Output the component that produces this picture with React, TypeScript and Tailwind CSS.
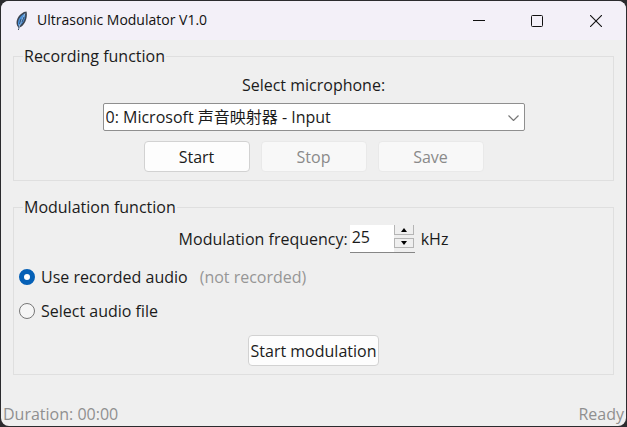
import { useState } from 'react';
import type { ReactNode } from 'react';

function FeatherIcon() {
  return (
    <svg width="14" height="20" viewBox="0 0 14 20" aria-hidden="true">
      <path d="M3 19 L3 16 C0 12 2 6 6 3 C8 1.300 10 .5 11.500 .5 C12.500 4 11.500 10 8.500 13.500 C7 15.500 6 16 4.500 16.500 L3.800 19 Z" fill="#3b4452" />
      <path d="M3 13.500 C2.500 8.500 5.500 4.500 10 2.500 C10.800 6 9.500 9.500 7 12.500 L4 15.500 Z" fill="#4a8fd6" />
      <path d="M10 2.500 C8 7 5.500 11 3.500 18" fill="none" stroke="#a9c4e0" strokeWidth=".8" />
      <path d="M6 8 L4.500 13 M9 6 L7 11" fill="none" stroke="#27405f" strokeWidth=".8" />
    </svg>
  );
}

function TitleBar() {
  return (
    <header className="flex h-[39px] items-center bg-[#f3f0f8] pl-3.5 text-sm text-[#111111]">
      <FeatherIcon />
      <h1 className="ml-2 grow pb-px font-['Open_Sans',sans-serif]">Ultrasonic Modulator V1.0</h1>
      <button type="button" aria-label="Minimize" className="flex h-full w-[58px] items-center justify-center">
        <svg width="12" height="12" viewBox="0 0 12 12"><path d="M0 5.500H12" stroke="#111" /></svg>
      </button>
      <button type="button" aria-label="Maximize" className="flex h-full w-[58px] items-center justify-center">
        <svg width="12" height="12" viewBox="0 0 12 12" fill="none"><rect x=".5" y=".5" width="11" height="11" rx="1" stroke="#111" /></svg>
      </button>
      <button type="button" aria-label="Close" className="flex h-full w-[60px] items-center justify-center">
        <svg width="12" height="12" viewBox="0 0 12 12"><path d="M0 0L12 12M12 0L0 12" stroke="#111" strokeWidth="1.100" /></svg>
      </button>
    </header>
  );
}

function Group({ title, children }: { title: string; children: ReactNode }) {
  return (
    <fieldset className="min-w-0 border border-[#dfdfdf] px-[5px] pb-2">
      <legend className="ml-1 px-px">{title}</legend>
      {children}
    </fieldset>
  );
}

function PushButton({ children, disabled, wide }: { children: ReactNode; disabled?: boolean; wide?: boolean }) {
  return (
    <button
      type="button"
      disabled={disabled}
      className={`h-[31px] rounded border border-[#d2d2d2] bg-[#fdfdfd] text-[#1b1b1b] disabled:border-[#e9e9e9] disabled:bg-[#f8f8f8] disabled:text-[#8a8a8a] ${wide ? 'px-0.5' : 'w-[106px]'}`}
    >
      {children}
    </button>
  );
}

function Radio({ id, label, checked, onPick }: { id: string; label: string; checked: boolean; onPick: () => void }) {
  return (
    <>
      <input
        id={id}
        type="radio"
        name="source"
        checked={checked}
        onChange={onPick}
        className="size-4 shrink-0 appearance-none rounded-full border border-[#777777] bg-[#f5f5f5] checked:border-5 checked:border-[#0560b6] checked:bg-white"
      />
      <label htmlFor={id} className="ml-1.5">{label}</label>
    </>
  );
}

export default function App() {
  const [source, setSource] = useState('recorded');
  const [freq, setFreq] = useState(25);

  return (
    <div className="flex min-h-screen bg-[#2b2b2e] p-px font-['Open_Sans','Noto_Sans_CJK_SC',sans-serif] text-base leading-5 text-[#1b1b1b]">
      <div className="flex grow flex-col overflow-hidden rounded-lg bg-[#efefef]">
        <TitleBar />
        <main className="flex grow flex-col gap-4 px-3 pt-1.5">
          <Group title="Recording function">
            <div className="flex flex-col items-center pt-[9px]">
              <label htmlFor="mic">Select microphone:</label>
              <div className="relative mt-2 w-[422px] max-w-full">
                <select id="mic" className="h-7 w-full appearance-none rounded-xs border border-[#8f8f8f] bg-white pl-0.5 text-base">
                  <option>0: Microsoft 声音映射器 - Input</option>
                </select>
                <svg className="pointer-events-none absolute top-3 right-1.5" width="11" height="6" viewBox="0 0 11 6" fill="none">
                  <path d="M.5 .5L5.500 5.500L10.500 .5" stroke="#777" strokeWidth="1.200" />
                </svg>
              </div>
              <div className="mt-2.5 flex gap-[11px]">
                <PushButton>Start</PushButton>
                <PushButton disabled>Stop</PushButton>
                <PushButton disabled>Save</PushButton>
              </div>
            </div>
          </Group>

          <Group title="Modulation function">
            <div className="flex items-center justify-center pt-2">
              <label htmlFor="freq">Modulation frequency:</label>
              <div className="ml-0.5 flex h-7 border-b border-[#868686] bg-white">
                <input
                  id="freq"
                  type="text"
                  value={freq}
                  onChange={(e) => setFreq(Number(e.target.value) || 0)}
                  className="w-11 bg-white px-0.5 pb-1 outline-none"
                />
                <div className="flex flex-col justify-between bg-[#efefef] pr-px pb-1">
                  <button type="button" aria-label="Increase" onClick={() => setFreq(freq + 1)} className="flex h-2.5 w-5 items-center justify-center border border-t-0 border-[#b5b5b5]">
                    <svg width="6" height="4" viewBox="0 0 6 4"><path d="M3 0L6 4H0Z" fill="#000" /></svg>
                  </button>
                  <button type="button" aria-label="Decrease" onClick={() => setFreq(freq - 1)} className="flex h-2.5 w-5 items-center justify-center border border-[#b5b5b5]">
                    <svg width="6" height="4" viewBox="0 0 6 4"><path d="M0 0H6L3 4Z" fill="#000" /></svg>
                  </button>
                </div>
              </div>
              <span className="ml-1.5">kHz</span>
            </div>
            <div className="mt-3.5 flex items-center">
              <Radio id="recorded" label="Use recorded audio" checked={source === 'recorded'} onPick={() => setSource('recorded')} />
              <span className="ml-3 text-[#969696]">(not recorded)</span>
            </div>
            <div className="mt-3.5 flex items-center">
              <Radio id="file" label="Select audio file" checked={source === 'file'} onPick={() => setSource('file')} />
            </div>
            <div className="mt-3.5 flex justify-center">
              <PushButton wide>Start modulation</PushButton>
            </div>
          </Group>
        </main>
        <footer className="flex justify-between px-0.5 pb-0.5 text-[#8f8f8f]">
          <span>Duration: 00:00</span>
          <span>Ready</span>
        </footer>
      </div>
    </div>
  );
}
